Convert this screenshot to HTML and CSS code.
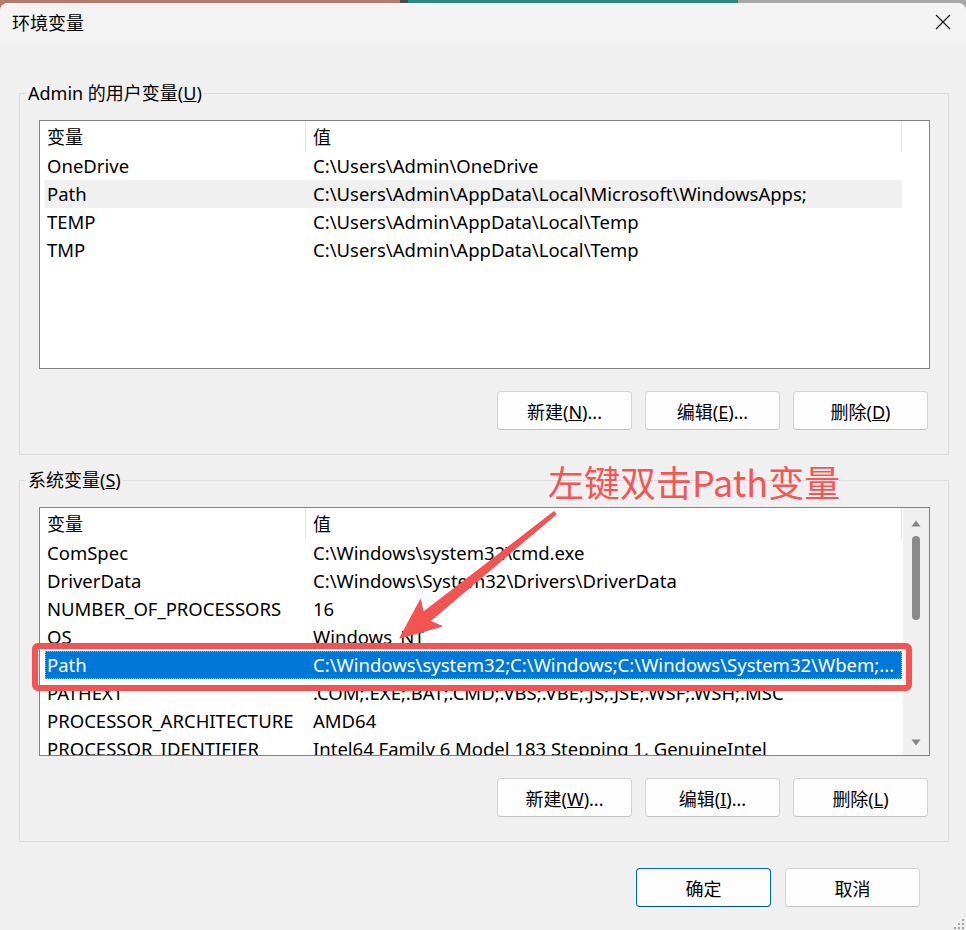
FILE: index.html
```html
<!DOCTYPE html>
<html lang="zh-CN">
<head>
    <meta charset="UTF-8">
    <meta name="viewport" content="width=device-width, initial-scale=1.0">
    <title>环境变量</title>
    <link rel="stylesheet" href="styles.css">
</head>
<body>
    <div class="window">
        <div class="titlebar">
            <span class="title">环境变量</span>
            <span class="close">
                <svg width="16" height="16" viewBox="0 0 16 16"><path d="M1 1L15 15M15 1L1 15" stroke="#1b1b1b" stroke-width="1.2" fill="none"/></svg>
            </span>
        </div>

        <div class="content">
            <fieldset class="group">
                <legend>Admin 的用户变量(<u>U</u>)</legend>
                <div class="list">
                    <div class="list-main">
                        <div class="list-head">
                            <div class="cell name">变量</div>
                            <div class="cell value">值</div>
                        </div>
                        <div class="row"><div class="cell name">OneDrive</div><div class="cell value">C:\Users\Admin\OneDrive</div></div>
                        <div class="row hover"><div class="cell name">Path</div><div class="cell value">C:\Users\Admin\AppData\Local\Microsoft\WindowsApps;</div></div>
                        <div class="row"><div class="cell name">TEMP</div><div class="cell value">C:\Users\Admin\AppData\Local\Temp</div></div>
                        <div class="row"><div class="cell name">TMP</div><div class="cell value">C:\Users\Admin\AppData\Local\Temp</div></div>
                    </div>
                </div>
                <div class="actions">
                    <button class="btn">新建(<u>N</u>)...</button>
                    <button class="btn">编辑(<u>E</u>)...</button>
                    <button class="btn">删除(<u>D</u>)</button>
                </div>
            </fieldset>

            <fieldset class="group second">
                <legend>系统变量(<u>S</u>)</legend>
                <div class="list">
                    <div class="list-main">
                        <div class="list-head">
                            <div class="cell name">变量</div>
                            <div class="cell value">值</div>
                        </div>
                        <div class="row"><div class="cell name">ComSpec</div><div class="cell value">C:\Windows\system32\cmd.exe</div></div>
                        <div class="row"><div class="cell name">DriverData</div><div class="cell value">C:\Windows\System32\Drivers\DriverData</div></div>
                        <div class="row"><div class="cell name">NUMBER_OF_PROCESSORS</div><div class="cell value">16</div></div>
                        <div class="row"><div class="cell name">OS</div><div class="cell value">Windows_NT</div></div>
                        <div class="row selected"><div class="cell name">Path</div><div class="cell value">C:\Windows\system32;C:\Windows;C:\Windows\System32\Wbem;...</div></div>
                        <div class="row"><div class="cell name">PATHEXT</div><div class="cell value">.COM;.EXE;.BAT;.CMD;.VBS;.VBE;.JS;.JSE;.WSF;.WSH;.MSC</div></div>
                        <div class="row"><div class="cell name">PROCESSOR_ARCHITECTURE</div><div class="cell value">AMD64</div></div>
                        <div class="row"><div class="cell name">PROCESSOR_IDENTIFIER</div><div class="cell value">Intel64 Family 6 Model 183 Stepping 1, GenuineIntel</div></div>
                    </div>
                    <div class="scrollbar">
                        <svg width="10" height="7" viewBox="0 0 10 7"><path d="M5 0.5L9.5 6.5H0.5Z" fill="#858585"/></svg>
                        <div class="thumb"></div>
                        <svg class="down" width="10" height="7" viewBox="0 0 10 7"><path d="M0.5 0.5H9.5L5 6.5Z" fill="#858585"/></svg>
                    </div>
                </div>
                <div class="actions">
                    <button class="btn">新建(<u>W</u>)...</button>
                    <button class="btn">编辑(<u>I</u>)...</button>
                    <button class="btn">删除(<u>L</u>)</button>
                </div>
            </fieldset>

            <div class="footer">
                <button class="btn primary">确定</button>
                <button class="btn">取消</button>
            </div>
        </div>

        <svg class="grip" width="12" height="12" viewBox="0 0 12 12">
            <rect x="9" y="1" width="2" height="2"/>
            <rect x="9" y="5" width="2" height="2"/>
            <rect x="5" y="5" width="2" height="2"/>
            <rect x="9" y="9" width="2" height="2"/>
            <rect x="5" y="9" width="2" height="2"/>
            <rect x="1" y="9" width="2" height="2"/>
        </svg>
    </div>

    <!-- red annotation drawn over the dialog -->
    <div class="annotations">
        <svg class="marks" width="966" height="930" viewBox="0 0 966 930">
            <rect x="35" y="646" width="874" height="42" rx="3" fill="none" stroke="#f25353" stroke-width="6"/>
            <polygon points="400,638 441.7,626.2 429.9,621 555.9,514.2 554.1,511.8 423.1,612.4 420.5,599.8" fill="#f25353" stroke="#f25353" stroke-width="1.2" stroke-linejoin="round"/>
        </svg>
        <div class="callout">左键双击Path变量</div>
    </div>
</body>
</html>
```

FILE: styles.css
```css
* {
    box-sizing: border-box;
}
html, body {
    margin: 0;
}
body {
    position: relative;
    width: 966px;
    height: 930px;
    overflow: hidden;
    background: linear-gradient(to right, #b27a6b 0, #b27a6b 400px, #4b4b4b 400px, #4b4b4b 408px, #2e887d 408px, #2e887d 738px, #a7a7a7 738px);
    font-family: "Noto Sans", "Noto Sans CJK SC", sans-serif;
    font-size: 18px;
    color: #000;
}
.window {
    position: relative;
    margin-top: 3px;
    height: 927px;
    background: #f0f0f0;
    border-radius: 8px 8px 0 0;
    overflow: hidden;
}
.titlebar {
    height: 41px;
    background: #f3f3f3;
    display: flex;
    align-items: center;
    justify-content: space-between;
    padding: 0 15px 3px 12px;
}
.title {
    font-size: 18px;
}
.close {
    display: flex;
    width: 16px;
    height: 16px;
}
.content {
    padding: 37px 17px 0 19px;
}
.group {
    margin: 0;
    min-width: 0;
    border: 1px solid #dcdcdc;
    padding: 15px 18px 24px 19px;
}
.group.second {
    margin-top: 13px;
}
.group legend {
    padding: 0 2px;
    margin-left: -13px;
    line-height: 24px;
}
.list {
    height: 249px;
    border: 1px solid #838383;
    background: #fff;
    display: flex;
    overflow: hidden;
}
.list-main {
    flex: 1;
    min-width: 0;
    padding-left: 5px;
    overflow: hidden;
}
.list-head, .row {
    display: grid;
    grid-template-columns: 261px 596px;
    width: 857px;
}
.cell {
    white-space: nowrap;
    overflow: hidden;
}
.list-head {
    margin-top: -1px;
}
.list-head .cell {
    height: 31px;
    margin-top: 1px;
    padding-top: 2px;
    line-height: 29px;
    border-right: 1px solid #e5e5e5;
}
.name {
    padding-left: 2px;
}
.value {
    padding-left: 7px;
}
.row {
    height: 28px;
    line-height: 28px;
    font-size: 18.5px;
}
.row.hover {
    background: #f0f0f0;
}
.row.selected {
    background: #0078d7;
    color: #fff;
    outline: 1px dotted #e9a25a;
    outline-offset: -1px;
}
.scrollbar {
    width: 26px;
    background: #f0f0f0;
    display: flex;
    flex-direction: column;
    align-items: center;
    padding: 12px 1px 9px 0;
}
.thumb {
    width: 8px;
    height: 84px;
    margin-top: 9px;
    border-radius: 4px;
    background: #8a8a8a;
}
.scrollbar .down {
    margin-top: auto;
}
.actions {
    display: flex;
    justify-content: flex-end;
    gap: 13px;
    margin-top: 22px;
    padding-right: 2px;
}
.btn {
    width: 135px;
    height: 39px;
    padding: 0;
    border: 1px solid #d3d3d3;
    border-bottom-color: #c2c2c2;
    border-radius: 4px;
    background: #fdfdfd;
    font-family: inherit;
    font-size: 18px;
    color: #000;
}
.btn.primary {
    border-color: #0067c0;
    border-bottom-color: #00539c;
}
.footer {
    display: flex;
    justify-content: flex-end;
    gap: 14px;
    margin-top: 26px;
    padding-right: 29px;
}
.grip {
    position: absolute;
    right: 1px;
    bottom: 0;
    fill: #a2a2a2;
}
.annotations {
    position: absolute;
    inset: 0;
    pointer-events: none;
}
.marks {
    position: absolute;
    left: 0;
    top: 0;
}
.callout {
    position: absolute;
    left: 548px;
    top: 459px;
    font-family: "Noto Sans CJK SC", sans-serif;
    font-size: 36px;
    line-height: 44px;
    color: #f45656;
    white-space: nowrap;
}
```
